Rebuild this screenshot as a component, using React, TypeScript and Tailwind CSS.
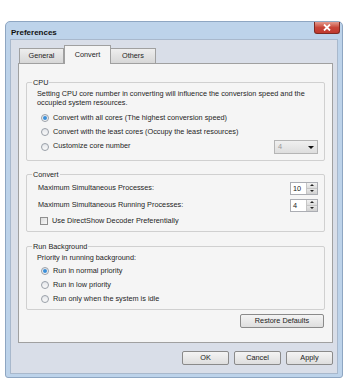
import React from "react"

const font = { fontFamily: '"Liberation Sans", Arial, sans-serif' }

function Radio({ checked, label }: { checked?: boolean; label: string }) {
  return (
    <div className="flex items-center h-[14px]">
      <span className="ml-[4px] w-[8px] h-[8px] rounded-full border border-[#9aa0a8] bg-gradient-to-b from-[#e4e6ea] to-[#fafafa] flex items-center justify-center">
        {checked && <span className="w-[4px] h-[4px] rounded-full bg-[#3b8fd8]" />}
      </span>
      <span className="ml-[4px]">{label}</span>
    </div>
  )
}

function Spinner({ value }: { value: string }) {
  return (
    <div className="flex h-[13px] border border-[#abadb3] bg-white">
      <div className="w-[15px] pl-[2px] leading-[11px] text-[#222]">{value}</div>
      <div className="w-[11px] flex flex-col border-l border-[#c5c5c5]">
        <div className="flex-1 bg-gradient-to-b from-[#f2f2f2] to-[#dcdcdc] flex items-center justify-center border-b border-[#c5c5c5]">
          <span className="w-0 h-0 border-l-[2px] border-r-[2px] border-b-[2px] border-l-transparent border-r-transparent border-b-[#222]" />
        </div>
        <div className="flex-1 bg-gradient-to-b from-[#e6e6e6] to-[#d0d0d0] flex items-center justify-center">
          <span className="w-0 h-0 border-l-[2px] border-r-[2px] border-t-[2px] border-l-transparent border-r-transparent border-t-[#222]" />
        </div>
      </div>
    </div>
  )
}

function Button({ label, w }: { label: string; w: string }) {
  return (
    <button
      className={`${w} h-[14px] rounded-[2px] border border-[#8a8a8a] bg-gradient-to-b from-[#f4f4f4] to-[#dedede] text-[#222] leading-[12px]`}
    >
      {label}
    </button>
  )
}

export default function App() {
  return (
    <div className="w-[350px] h-[384px] bg-white pt-[21px] pl-[5px] text-[7.3px] text-[#1e1e1e]" style={font}>
      {/* Window */}
      <div className="w-[338px] rounded-t-[5px] rounded-b-[3px] border border-[#8ea6c2] bg-[#bdd3ea] px-[4px] pb-[3px]">
        {/* Title bar */}
        <div className="h-[17px] flex items-start justify-between">
          <span className="mt-[6px] ml-[1px] font-bold text-[8px] leading-[9px] text-[#111]">Preferences</span>
          <div className="mr-[-2px] w-[26px] h-[12px] rounded-b-[3px] border border-[#7e2a22] border-t-0 bg-gradient-to-b from-[#e39a8e] via-[#c8463a] to-[#c0392e] flex items-center justify-center">
            <svg width="8" height="7" viewBox="0 0 8 7">
              <path d="M1 0.5 L7 6.5 M7 0.5 L1 6.5" stroke="#fff" strokeWidth="1.8" />
            </svg>
          </div>
        </div>

        {/* Client area */}
        <div className="border border-[#a8b8cc] bg-[#d9dee8] pl-[7px] pr-[4px] pt-[4px] pb-[8px]">
          {/* Tabs */}
          <div className="flex items-end h-[19px] pl-[1px]">
            <div className="w-[45px] h-[15px] border border-[#a0a0a0] border-b-0 bg-gradient-to-b from-[#eeeeee] to-[#d7d7d7] flex items-center justify-center">
              General
            </div>
            <div className="w-[47px] h-[19px] -mb-[1px] border border-[#a0a0a0] border-b-0 bg-[#f5f5f5] flex items-center justify-center relative z-10">
              Convert
            </div>
            <div className="w-[45px] h-[15px] border border-[#a0a0a0] border-b-0 border-l-0 bg-gradient-to-b from-[#eeeeee] to-[#d7d7d7] flex items-center justify-center">
              Others
            </div>
          </div>

          {/* Panel */}
          <div className="border border-[#a0a0a0] bg-[#f5f5f5] px-[7px] pt-[14px] pb-[14px]">
            <fieldset className="border border-[#d0d0d0] rounded-[2px] pl-[10px] pr-[6px] pt-[2px] pb-[6px]">
              <legend className="-ml-[5px] px-[1px] leading-[9px]">CPU</legend>
              <div className="leading-[9px]">
                Setting CPU core number in converting will influence the conversion speed and the occupied system resources.
              </div>
              <div className="mt-[4px]">
                <Radio checked label="Convert with all cores (The highest conversion speed)" />
                <Radio label="Convert with the least cores (Occupy the least resources)" />
                <div className="flex items-center justify-between">
                  <Radio label="Customize core number" />
                  <div className="w-[44px] h-[14px] mt-[1px] border border-[#b5b5b5] bg-gradient-to-b from-[#f0f0f0] to-[#dedede] flex items-center justify-between px-[3px]">
                    <span className="text-[#9a9a9a]">4</span>
                    <span className="w-0 h-0 border-l-[3px] border-r-[3px] border-t-[3px] border-l-transparent border-r-transparent border-t-[#111]" />
                  </div>
                </div>
              </div>
            </fieldset>

            <fieldset className="mt-[9px] border border-[#d0d0d0] rounded-[2px] pl-[11px] pr-[6px] pt-[2px] pb-[3px]">
              <legend className="-ml-[6px] px-[1px] leading-[9px]">Convert</legend>
              <div className="flex items-center justify-between h-[14px]">
                <span>Maximum Simultaneous Processes:</span>
                <Spinner value="10" />
              </div>
              <div className="mt-[3px] flex items-center justify-between h-[14px]">
                <span>Maximum Simultaneous Running Processes:</span>
                <Spinner value="4" />
              </div>
              <div className="mt-[2px] flex items-center h-[14px]">
                <span className="ml-[2px] w-[8px] h-[8px] border border-[#8f8f8f] bg-gradient-to-br from-[#dcdcdc] to-[#f8f8f8]" />
                <span className="ml-[4px]">Use DirectShow Decoder Preferentially</span>
              </div>
            </fieldset>

            <fieldset className="mt-[10px] border border-[#d0d0d0] rounded-[2px] pl-[10px] pr-[6px] pt-[2px] pb-[3px]">
              <legend className="-ml-[5px] px-[1px] leading-[9px]">Run Background</legend>
              <div className="leading-[9px]">Priority in running background:</div>
              <div className="mt-[2px]">
                <Radio checked label="Run in normal priority" />
                <Radio label="Run in low priority" />
                <Radio label="Run only when the system is idle" />
              </div>
            </fieldset>

            <div className="mt-[4px] flex justify-end pr-[1px]">
              <Button label="Restore Defaults" w="w-[84px]" />
            </div>
          </div>

          {/* Dialog buttons */}
          <div className="mt-[8px] flex justify-end gap-[5px]">
            <Button label="OK" w="w-[47px]" />
            <Button label="Cancel" w="w-[47px]" />
            <Button label="Apply" w="w-[47px]" />
          </div>
        </div>
      </div>
    </div>
  )
}
